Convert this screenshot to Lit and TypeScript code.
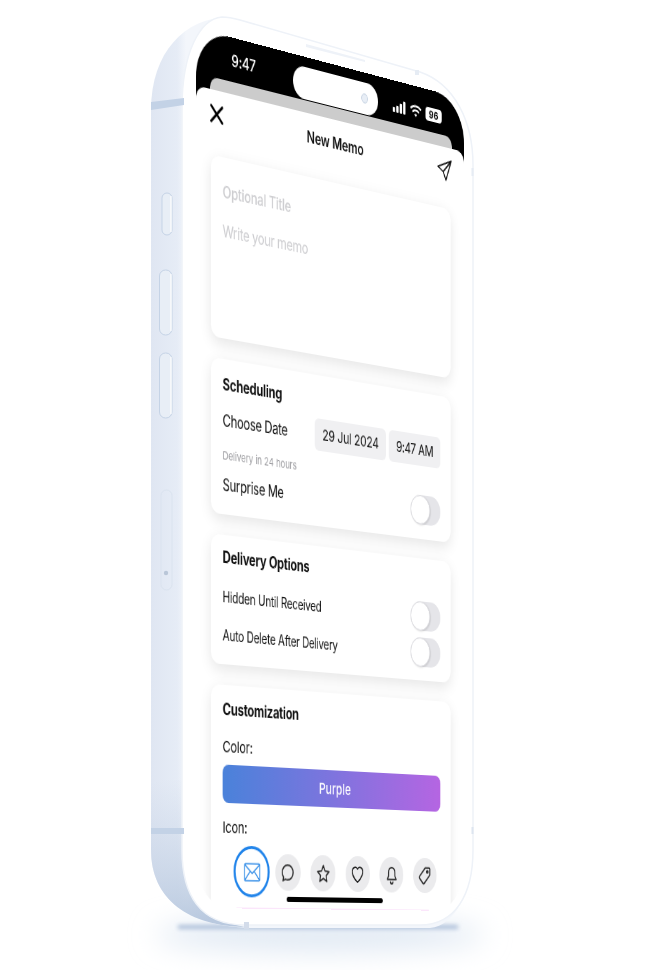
import { LitElement, html, css } from "lit";
import { customElement } from "lit/decorators.js";

@customElement("app-root")
export class AppRoot extends LitElement {
  static styles = css`
    :host { display: block; }
    .stage { position: relative; width: 660px; height: 970px; overflow: hidden; background: #fff; font-family: Inter, "Liberation Sans", sans-serif; color: #111; filter: blur(.35px); }
    .body { position: absolute; left: 0; top: 0; }
    .screen {
      position: absolute; left: 0; top: 0; width: 390px; height: 844px; overflow: hidden;
      border-radius: 46px; background: linear-gradient(#000 0 90px, #fff 90px);
      transform-origin: 0 0;
      transform: matrix3d(.78682,.20331,0,.00021472, 0,1.04265,0,0, 0,0,1,0, 196,28,0,1);
    }
    .status { height: 43px; display: flex; align-items: center; box-sizing: border-box; padding: 0 28px 0 48px; color: #fff; }
    .clock { font-size: 16px; font-weight: 500; width: 86px; margin-top: 0; letter-spacing: -.2px; }
    .island { width: 124px; height: 32px; border-radius: 16px; background: #fff; margin-top: 9px; display: flex; align-items: center; justify-content: flex-end; padding-right: 15px; box-sizing: border-box; }
    .lens { width: 10px; height: 10px; border-radius: 50%; border: 1.5px solid #c3cfdf; background: #e8eef6; box-sizing: border-box; }
    .sys { display: flex; align-items: center; gap: 6px; margin-left: 22px; margin-top: 7px; }
    .batt { width: 25px; height: 14px; border-radius: 4px; background: #fff; color: #000; font-size: 11px; font-weight: 700; line-height: 14px; text-align: center; }
    .peek { height: 12px; margin: 0 19px; background: #ccc; border-radius: 10px 10px 0 0; }
    .sheet { height: 800px; background: #fff; border-radius: 12px 12px 0 0; overflow: hidden; }
    .head { height: 46px; display: grid; grid-template-columns: 1fr auto 1fr; align-items: center; padding: 0 18px; margin-bottom: 17px; }
    .title { font-size: 15.5px; font-weight: 600; letter-spacing: -.2px; }
    .close { justify-self: start; margin-left: 1px; }
    .send { justify-self: end; }
    .cards { display: flex; flex-direction: column; gap: 20px; padding: 0 21px 0 20px; }
    .card { background: #fff; border-radius: 12px; padding: 15px 16px; box-sizing: border-box; box-shadow: 0 5px 16px rgba(0,0,0,.1); }
    .c1 { height: 175px; padding-top: 24px; }
    .ph1 { font-size: 15.5px; font-weight: 500; line-height: 20px; color: #cdcdd0; letter-spacing: -.25px; }
    .ph2 { font-size: 15.5px; line-height: 20px; color: #cdcdd0; margin-top: 18px; letter-spacing: -.4px; }
    h3 { margin: 0; font-size: 15.5px; font-weight: 650; line-height: 20px; letter-spacing: -.3px; }
    .sched-row { display: flex; align-items: center; margin-top: 8px; height: 32px; }
    .label { font-size: 15.5px; flex: 1; letter-spacing: -.4px; }
    .chip { height: 32px; line-height: 32px; background: #f0f0f2; border-radius: 6px; text-align: center; font-size: 15px; letter-spacing: -.2px; }
    .date { width: 105px; margin-right: 4px; }
    .time { width: 79px; letter-spacing: -.5px; }
    .hint { font-size: 11px; line-height: 14px; margin-top: 11px; color: #9c9ca0; letter-spacing: -.05px; }
    .row { display: flex; align-items: center; height: 30px; }
    .surprise { margin-top: 5px; }
    .surprise .label { padding-top: 3px; }
    .small { font-size: 14px; flex: 1; letter-spacing: -.35px; }
    .toggle { width: 46px; height: 30px; border-radius: 15px; background: #e5e5e9; position: relative; flex: none; }
    .toggle::after { content: ""; position: absolute; left: 0; top: 0; width: 30px; height: 30px; border-radius: 50%; background: #fff; border: 1px solid #dcdce0; box-sizing: border-box; box-shadow: 1px 1px 2px rgba(0,0,0,.12); }
    .c3 { height: 125px; padding-top: 12px; }
    .c3 .row { margin-top: 7px; }
    .c3 h3 + .row { margin-top: 12px; }
    .c4 { padding: 14px 16px 40px; }
    .field { font-size: 15px; line-height: 20px; letter-spacing: -.2px; }
    .f1 { margin-top: 16px; }
    .f2 { margin-top: 14px; }
    .swatch { margin-top: 7px; height: 37px; line-height: 37px; border-radius: 8px; text-align: center; color: #fff; font-size: 15px; font-weight: 500; background: linear-gradient(90deg, #4a82da, #b565e2); }
    .icons { display: flex; gap: 14.5px; margin-top: 14px; padding-left: 22px; }
    .ico { width: 36px; height: 36px; border-radius: 50%; background: #ebebed; display: flex; align-items: center; justify-content: center; flex: none; color: #222; }
    .ico svg { width: 23px; height: 23px; fill: none; stroke: currentColor; stroke-width: 1.6; stroke-linejoin: round; stroke-linecap: round; }
    .ico.on { background: #fff; border: 2px solid #1f83ea; box-sizing: border-box; transform: scale(1.39); color: #2a88e6; }
    .ico.on svg { width: 19px; height: 19px; stroke-width: 1.2; }
    .indicator { position: absolute; left: 125px; top: 832px; width: 140px; height: 5px; border-radius: 3px; background: #000; }
    .glow { position: absolute; left: 55px; top: 843px; width: 280px; height: 1px; background: #fbe6fb; }
  `;

  private toggle() {
    return html`<span class="toggle"></span>`;
  }

  render() {
    return html`
      <div class="stage">
        <svg class="body" width="660" height="970" viewBox="0 0 660 970">
          <defs>
            <linearGradient id="side" gradientUnits="userSpaceOnUse" x1="151" y1="0" x2="186" y2="0">
              <stop offset="0" stop-color="#dfe6f2" />
              <stop offset=".75" stop-color="#e6ecf6" />
              <stop offset="1" stop-color="#f3f6fb" />
            </linearGradient>
            <linearGradient id="corner" gradientUnits="userSpaceOnUse" x1="160" y1="780" x2="205" y2="920">
              <stop offset="0" stop-color="#c6d3e6" stop-opacity="0" />
              <stop offset="1" stop-color="#b9c9df" />
            </linearGradient>
            <filter id="soft" x="-30%" y="-300%" width="160%" height="700%"><feGaussianBlur stdDeviation="14" /></filter>
            <filter id="tight" x="-10%" y="-300%" width="120%" height="700%"><feGaussianBlur stdDeviation="2" /></filter>
          </defs>
          <ellipse cx="320" cy="935" rx="165" ry="16" fill="#dfe8f3" filter="url(#soft)" />
          <path d="M178 925 H458 V929 H178Z" fill="#aabdd8" filter="url(#tight)" />
          <path d="M228 17 C185 18 151 52 151 110 V850 C151 898 186 926 250 928 H430 C455 926 473 890 473 850 V170 Z" fill="url(#side)" />
          <path d="M151 780 H186 V860 C190 895 205 918 245 927 C190 926 151 900 151 850Z" fill="url(#corner)" />
          <path d="M222 17 C200 19 182 52 182 108 V850 C182 895 200 925 245 925 H420 C455 925 473 895 473 850 V165 C473 122 455 84 420 72 L240 20 C233 18 228 17 222 17Z" fill="#fff" stroke="#eef2f8" stroke-width="1.5" />
          <path d="M151 102 L184 98 V105 L151 110Z" fill="#c3d2e6" />
          <rect x="151" y="828" width="33" height="6" fill="#c3d2e6" />
          <rect x="471.500" y="168" width="2" height="8" fill="#e6ecf4" />
          <rect x="471.500" y="827" width="2" height="7" fill="#dde5f0" />
          <path d="M306 44 L365 60 V62 L306 47Z" fill="#eef2f8" />
          <rect x="415" y="70" width="4" height="5" fill="#e6ecf4" />
          <rect x="244" y="922" width="5" height="7" fill="#d3dcea" />
          <g fill="#e8eef6" stroke="#c5d3e6" stroke-width="1">
            <rect x="162" y="193" width="10" height="42" rx="5" />
            <rect x="159.500" y="270" width="12.500" height="65" rx="6" />
            <rect x="159.500" y="353" width="12.500" height="65" rx="6" />
          </g>
          <g fill="none" stroke="#fff" stroke-width="1.2">
            <path d="M171 196 V232" />
            <path d="M171 274 V331" />
            <path d="M171 357 V414" />
          </g>
          <rect x="161" y="490" width="11" height="100" rx="5.500" fill="none" stroke="#dae3ef" />
          <circle cx="166" cy="573" r="2.200" fill="#b9c6d8" />
        </svg>
        <div class="screen">
          <div class="status">
            <span class="clock">9:47</span>
            <span class="island"><span class="lens"></span></span>
            <span class="sys">
              <svg width="20" height="13" viewBox="0 0 20 13" fill="#fff"><rect x="0" y="8" width="3.500" height="5" rx="1"/><rect x="5.300" y="6" width="3.500" height="7" rx="1"/><rect x="10.600" y="3" width="3.500" height="10" rx="1"/><rect x="15.900" y="0" width="3.500" height="13" rx="1"/></svg>
              <svg width="18" height="13" viewBox="0 0 18 13" fill="none" stroke="#fff" stroke-width="2"><path d="M1 4.500 C5.500 .5 12.500 .5 17 4.500" /><path d="M4 7.800 C7 5.200 11 5.200 14 7.800" /><path d="M9 12.500 L6.800 10.300 C8 9.300 10 9.300 11.200 10.300Z" fill="#fff" stroke="none" /></svg>
              <span class="batt">96</span>
            </span>
          </div>
          <div class="peek"></div>
          <div class="sheet">
            <div class="head">
              <svg class="close" width="18" height="18" viewBox="0 0 18 18" stroke="#000" stroke-width="2.600" stroke-linecap="round"><path d="M1.500 1.500 L16.500 16.500 M16.500 1.500 L1.500 16.500" /></svg>
              <span class="title">New Memo</span>
              <svg class="send" width="25" height="25" viewBox="0 0 24 24" fill="none" stroke="#111" stroke-width="1.500" stroke-linejoin="round"><path d="M22 2 L2 10 L10 14 L14 22 Z M22 2 L10 14" /></svg>
            </div>
            <div class="cards">
              <section class="card c1">
                <div class="ph1">Optional Title</div>
                <div class="ph2">Write your memo</div>
              </section>
              <section class="card">
                <h3>Scheduling</h3>
                <div class="sched-row">
                  <span class="label">Choose Date</span>
                  <span class="chip date">29 Jul 2024</span>
                  <span class="chip time">9:47 AM</span>
                </div>
                <div class="hint">Delivery in 24 hours</div>
                <div class="row surprise"><span class="label">Surprise Me</span>${this.toggle()}</div>
              </section>
              <section class="card c3">
                <h3>Delivery Options</h3>
                <div class="row"><span class="small">Hidden Until Received</span>${this.toggle()}</div>
                <div class="row"><span class="small">Auto Delete After Delivery</span>${this.toggle()}</div>
              </section>
              <section class="card c4">
                <h3>Customization</h3>
                <div class="field f1">Color:</div>
                <div class="swatch">Purple</div>
                <div class="field f2">Icon:</div>
                <div class="icons">
                  <span class="ico on"><svg viewBox="0 0 24 24"><rect x="2.500" y="4.500" width="19" height="15" rx="1" /><path d="M3 5.500 L12 13 L21 5.500 M3 18.500 L9.500 11 M21 18.500 L14.500 11" /></svg></span>
                  <span class="ico"><svg viewBox="0 0 24 24"><path d="M12 4c4.600 0 8 3.200 8 7.500S16.600 19 12 19c-1.200 0-2.300-.2-3.300-.6L5 20l.9-3.500C4.700 15.200 4 13.500 4 11.500 4 7.200 7.400 4 12 4z" /></svg></span>
                  <span class="ico"><svg viewBox="0 0 24 24"><path d="M12 3.500l2.600 5.600 6.100.7-4.500 4.200 1.200 6-5.400-3-5.400 3 1.200-6-4.500-4.200 6.100-.7z" /></svg></span>
                  <span class="ico"><svg viewBox="0 0 24 24"><path d="M12 20s-8-4.900-8-11a4.500 4.500 0 0 1 8-2.800A4.500 4.500 0 0 1 20 9c0 6.100-8 11-8 11z" /></svg></span>
                  <span class="ico"><svg viewBox="0 0 24 24"><path d="M12 4c-3.200 0-5 2.400-5 5.500V13l-2 3.500h14L17 13V9.500C17 6.400 15.200 4 12 4z M10 19a2 2 0 0 0 4 0" /></svg></span>
                  <span class="ico"><svg viewBox="0 0 24 24"><path d="M13 3.500h6.500a1 1 0 0 1 1 1V11l-9 9a1.500 1.500 0 0 1-2 0L4 14.500a1.500 1.500 0 0 1 0-2z" /><circle cx="16.500" cy="7.500" r="1.200" /></svg></span>
                </div>
              </section>
            </div>
          </div>
          <div class="indicator"></div>
          <div class="glow"></div>
        </div>
      </div>
    `;
  }
}
